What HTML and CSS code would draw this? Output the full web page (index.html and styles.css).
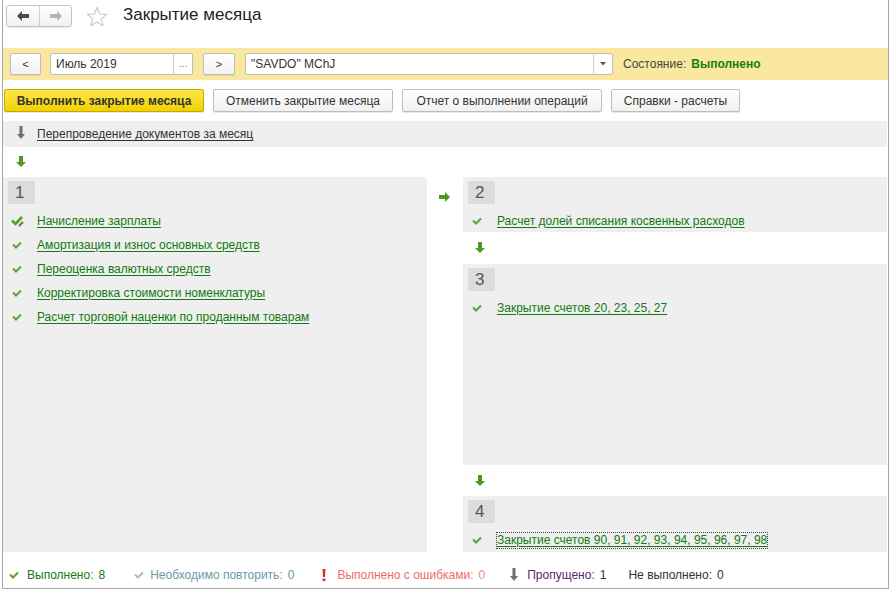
FILE: index.html
```html
<!DOCTYPE html>
<html lang="ru">
<head>
<meta charset="utf-8">
<title>Закрытие месяца</title>
<link rel="stylesheet" href="styles.css">
</head>
<body>
<div class="frame">
  <div class="header">
    <div class="nav">
      <button class="nav-btn">
        <svg width="14" height="12" viewBox="0 0 14 12"><path d="M1 6 L6 1 L6 4 L13 4 L13 8 L6 8 L6 11 Z" fill="#4a4a4a"/></svg>
      </button>
      <button class="nav-btn">
        <svg width="14" height="12" viewBox="0 0 14 12"><path d="M13 6 L8 1 L8 4 L1 4 L1 8 L8 8 L8 11 Z" fill="#b4b4b4"/></svg>
      </button>
    </div>
    <svg class="star" width="22" height="22" viewBox="0 0 22 22"><path d="M11 1.5 L13.6 8 L20.6 8.4 L15.2 12.9 L17 19.8 L11 16 L5 19.8 L6.8 12.9 L1.4 8.4 L8.4 8 Z" fill="none" stroke="#c8c8c8" stroke-width="1.1" stroke-linejoin="round"/></svg>
    <h1 class="title">Закрытие месяца</h1>
  </div>

  <div class="filter">
    <button class="btn small prev">&lt;</button>
    <div class="input period"><span class="val">Июль 2019</span><span class="pick">...</span></div>
    <button class="btn small next">&gt;</button>
    <div class="input org"><span class="val">"SAVDO" MChJ</span><span class="drop"><svg width="6" height="4" viewBox="0 0 6 4"><path d="M0 0 L6 0 L3 3.5 Z" fill="#555"/></svg></span></div>
    <span class="state-label">Состояние:</span>
    <span class="state-val">Выполнено</span>
  </div>

  <div class="actions">
    <button class="btn primary">Выполнить закрытие месяца</button>
    <button class="btn b2">Отменить закрытие месяца</button>
    <button class="btn b3">Отчет о выполнении операций</button>
    <button class="btn b4">Справки - расчеты</button>
  </div>

  <div class="repost">
    <svg class="ico" width="10" height="14" viewBox="0 0 10 14"><path d="M3.5 0 L6.5 0 L6.5 8 L9 8 L5 13 L1 8 L3.5 8 Z" fill="#707070"/></svg>
    <a class="link dark">Перепроведение документов за месяц</a>
  </div>

  <div class="arrow-row">
    <svg width="10" height="12" viewBox="0 0 10 12"><path d="M3 0 L7 0 L7 6 L10 6 L5 11 L0 6 L3 6 Z" fill="#4e9a23"/></svg>
  </div>

  <div class="main">
    <div class="panel left">
      <div class="num">1</div>
      <ul class="items">
        <li><span class="chk">
          <svg width="14" height="12" viewBox="0 0 14 12"><path d="M1 5.5 L4.5 9 L11 2" fill="none" stroke="#4fa52a" stroke-width="2.6"/><path d="M8 11 L12 7" stroke="#8a6a50" stroke-width="2.2"/></svg>
        </span><a class="link">Начисление зарплаты</a></li>
        <li><span class="chk"><svg width="12" height="10" viewBox="0 0 12 10"><path d="M2 4.5 L5 7.5 L10 2.5" fill="none" stroke="#5aa336" stroke-width="2"/></svg></span><a class="link">Амортизация и износ основных средств</a></li>
        <li><span class="chk"><svg width="12" height="10" viewBox="0 0 12 10"><path d="M2 4.5 L5 7.5 L10 2.5" fill="none" stroke="#5aa336" stroke-width="2"/></svg></span><a class="link">Переоценка валютных средств</a></li>
        <li><span class="chk"><svg width="12" height="10" viewBox="0 0 12 10"><path d="M2 4.5 L5 7.5 L10 2.5" fill="none" stroke="#5aa336" stroke-width="2"/></svg></span><a class="link">Корректировка стоимости номенклатуры</a></li>
        <li><span class="chk"><svg width="12" height="10" viewBox="0 0 12 10"><path d="M2 4.5 L5 7.5 L10 2.5" fill="none" stroke="#5aa336" stroke-width="2"/></svg></span><a class="link">Расчет торговой наценки по проданным товарам</a></li>
      </ul>
    </div>

    <div class="mid">
      <svg width="12" height="10" viewBox="0 0 12 10"><path d="M0 3 L6 3 L6 0 L11 5 L6 10 L6 7 L0 7 Z" fill="#4e9a23"/></svg>
    </div>

    <div class="right">
      <div class="panel p2">
        <div class="num">2</div>
        <ul class="items">
          <li><span class="chk"><svg width="12" height="10" viewBox="0 0 12 10"><path d="M2 4.5 L5 7.5 L10 2.5" fill="none" stroke="#5aa336" stroke-width="2"/></svg></span><a class="link">Расчет долей списания косвенных расходов</a></li>
        </ul>
      </div>
      <div class="arrow-row r">
        <svg width="10" height="12" viewBox="0 0 10 12"><path d="M3 0 L7 0 L7 6 L10 6 L5 11 L0 6 L3 6 Z" fill="#4e9a23"/></svg>
      </div>
      <div class="panel p3">
        <div class="num">3</div>
        <ul class="items">
          <li><span class="chk"><svg width="12" height="10" viewBox="0 0 12 10"><path d="M2 4.5 L5 7.5 L10 2.5" fill="none" stroke="#5aa336" stroke-width="2"/></svg></span><a class="link">Закрытие счетов 20, 23, 25, 27</a></li>
        </ul>
      </div>
      <div class="arrow-row r r2">
        <svg width="10" height="12" viewBox="0 0 10 12"><path d="M3 0 L7 0 L7 6 L10 6 L5 11 L0 6 L3 6 Z" fill="#4e9a23"/></svg>
      </div>
      <div class="panel p4">
        <div class="num">4</div>
        <ul class="items">
          <li><span class="chk"><svg width="12" height="10" viewBox="0 0 12 10"><path d="M2 4.5 L5 7.5 L10 2.5" fill="none" stroke="#5aa336" stroke-width="2"/></svg></span><a class="link focus">Закрытие счетов 90, 91, 92, 93, 94, 95, 96, 97, 98</a></li>
        </ul>
      </div>
    </div>
  </div>

  <div class="status">
    <span class="st ok"><svg width="12" height="10" viewBox="0 0 12 10"><path d="M2 4.5 L5 7.5 L10 2.5" fill="none" stroke="#5aa336" stroke-width="2"/></svg>Выполнено:<b>8</b></span>
    <span class="st rep"><svg width="12" height="10" viewBox="0 0 12 10"><path d="M2 4.5 L5 7.5 L10 2.5" fill="none" stroke="#9cc4bc" stroke-width="2"/></svg>Необходимо повторить:<b>0</b></span>
    <span class="st err"><svg width="12" height="14" viewBox="0 0 12 14"><path d="M4.5 1 L7.5 1 L7 9 L5 9 Z" fill="#e02828"/><rect x="4.6" y="10.5" width="2.8" height="2.6" fill="#e02828"/></svg>Выполнено с ошибками:<b>0</b></span>
    <span class="st skip"><svg width="12" height="14" viewBox="0 0 12 14"><path d="M4.5 0 L7.5 0 L7.5 8 L10 8 L6 13 L2 8 L4.5 8 Z" fill="#707070"/></svg>Пропущено:<b>1</b></span>
    <span class="st none">Не выполнено:<b>0</b></span>
  </div>
</div>
</body>
</html>
```

FILE: styles.css
```css
* { box-sizing: border-box; }
html, body { margin: 0; padding: 0; background: #fff; }
body {
  font-family: "Liberation Sans", Arial, sans-serif;
  font-size: 12px;
  color: #333;
}
.frame {
  margin-left: 2px;
  width: 887px;
  height: 589px;
  border-left: 1px solid #a8a8a8;
  border-right: 1px solid #a8a8a8;
  border-bottom: 1px solid #a8a8a8;
  display: flex;
  flex-direction: column;
}
.header {
  height: 48px;
  flex-shrink: 0;
  display: flex;
  align-items: flex-start;
  padding: 5px 0 0 3px;
}
.nav {
  display: flex;
  height: 22px;
  border: 1px solid #c4c4c4;
  border-radius: 3px;
  background: linear-gradient(#ffffff, #f0f0f0);
  box-shadow: 0 1px 1px rgba(0,0,0,0.08);
}
.nav-btn {
  width: 32px;
  height: 20px;
  border: none;
  background: transparent;
  padding: 0;
  display: flex;
  align-items: center;
  justify-content: center;
}
.nav-btn + .nav-btn { border-left: 1px solid #d0d0d0; }
.star { margin: 1px 0 0 14px; }
.title {
  margin: 0 0 0 15px;
  font-size: 17px;
  font-weight: normal;
  color: #222;
  line-height: 20px;
}
.filter {
  height: 32px;
  flex-shrink: 0;
  background: #fbe8a0;
  display: flex;
  align-items: center;
  padding-left: 7px;
}
.btn {
  font-family: inherit;
  font-size: 12px;
  color: #333;
  height: 23px;
  padding: 0;
  white-space: nowrap;
  border: 1px solid #bdbdbd;
  border-radius: 2px;
  background: linear-gradient(#ffffff, #f1f1f1);
  box-shadow: 0 1px 1px rgba(0,0,0,0.1);
  cursor: default;
}
.btn.small {
  height: 22px;
  font-size: 11px;
}
.btn.prev { width: 31px; }
.btn.next { width: 32px; }
.input {
  height: 22px;
  background: #fff;
  border: 1px solid #bdbdbd;
  border-radius: 2px;
  display: flex;
  align-items: center;
}
.input .val { flex: 1; padding-left: 5px; color: #333; }
.period { width: 143px; margin: 0 10px 0 9px; }
.period .pick {
  width: 19px; height: 100%;
  border-left: 1px solid #d0d0d0;
  font-size: 10px; color: #777;
  display: flex; align-items: flex-end; justify-content: center;
  padding-bottom: 5px;
}
.org { width: 368px; margin-left: 10px; }
.org .drop {
  width: 19px; height: 100%;
  border-left: 1px solid #d0d0d0;
  display: flex; align-items: center; justify-content: center;
}
.state-label { margin-left: 10px; color: #444; }
.state-val { margin-left: 5px; color: #12800f; font-weight: bold; }
.actions {
  height: 41px;
  flex-shrink: 0;
  display: flex;
  align-items: flex-start;
  padding: 9px 0 0 1px;
  gap: 9px;
}
.btn.primary {
  width: 200px;
  font-weight: bold;
  color: #333;
  background: linear-gradient(#fde84a, #f2d100);
  border-color: #c6a800;
}
.btn.b2 { width: 180px; }
.btn.b3 { width: 200px; }
.btn.b4 { width: 129px; }
.repost {
  height: 26px;
  flex-shrink: 0;
  margin-right: 1px;
  background: #efefef;
  display: flex;
  align-items: center;
  padding-left: 13px;
}
.repost .ico { margin-right: 11px; margin-top: -2px; }
.link {
  color: #117a11;
  text-decoration: underline;
  text-underline-offset: 2px;
}
.link.dark { color: #333; }
.link.focus { outline: 1px dotted #444; outline-offset: 0; }
.arrow-row {
  height: 30px;
  flex-shrink: 0;
  display: flex;
  align-items: center;
  padding-left: 13px;
}
.main {
  height: 375px;
  flex-shrink: 0;
  display: flex;
  margin-right: 1px;
}
.panel {
  background: #efefef;
  padding: 4px 0 0 5px;
  flex-shrink: 0;
}
.panel.left { width: 424px; }
.num {
  width: 27px;
  height: 23px;
  background: #dcdcdc;
  color: #555;
  font-size: 17px;
  line-height: 23px;
  padding-left: 7px;
}
.items { list-style: none; margin: 5px 0 0 0; padding: 0; }
.items li {
  height: 24px;
  display: flex;
  align-items: center;
  line-height: 15px;
}
.chk {
  width: 29px;
  display: flex;
  align-items: center;
  padding-left: 3px;
}
.mid {
  width: 36px;
  display: flex;
  justify-content: center;
  align-items: flex-start;
  padding-top: 15px;
}
.right { flex: 1; display: flex; flex-direction: column; }
.p2 { height: 55px; }
.p3 { height: 201px; }
.p4 { flex: 1; }
.arrow-row.r { height: 32px; padding-left: 12px; }
.arrow-row.r2 { height: 31px; }
.status {
  height: 36px;
  flex-shrink: 0;
  display: flex;
  align-items: center;
  padding-left: 5px;
  padding-top: 9px;
}
.st { display: inline-flex; align-items: center; margin-right: 22px; }
.st svg { margin-right: 7px; }
.st b { font-weight: normal; margin-left: 5px; }
.st.ok { color: #117a11; }
.st.ok b { color: #117a11; }
.st.rep { color: #6b9aa6; margin-left: 6px; }
.st.rep svg { margin-right: 5px; }
.st.err { color: #ef6b6b; margin-left: 2px; }
.st.err b { color: #ef8b8b; }
.st.skip { color: #5a2a68; margin-left: 1px; }
.st.skip b { color: #333; }
.st.none { color: #333; margin-left: 0; }
```
